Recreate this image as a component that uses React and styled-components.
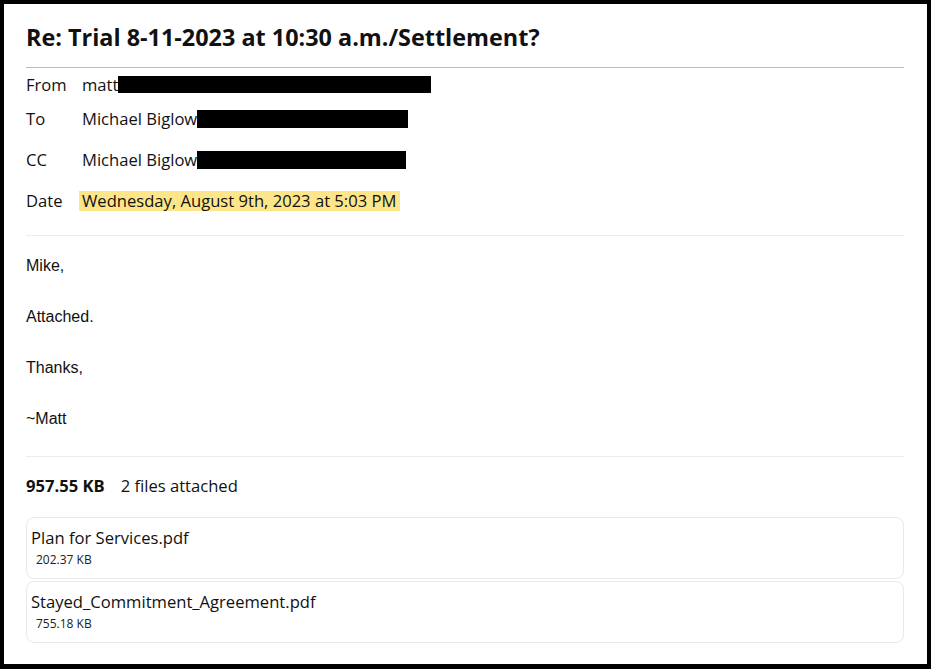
import React from "react";
import styled, { createGlobalStyle } from "styled-components";

const Global = createGlobalStyle`
  html, body { margin: 0; padding: 0; background: #000; }
  body { font-family: "Open Sans", "Noto Sans", sans-serif; color: #111; }
`;

const Page = styled.div`
  box-sizing: border-box;
  width: 931px;
  height: 669px;
  border: 4px solid #000;
  border-bottom-width: 5px;
  background: #fff;
  padding: 19px 23px 0 22px;
  overflow: hidden;
`;

const Title = styled.h1`
  margin: 0;
  font-family: "Open Sans", sans-serif;
  font-weight: 700;
  font-size: 23.4px;
  line-height: 28px;
  color: #111;
`;

const Divider = styled.hr`
  margin: ${(p) => p.$mt || 0}px 0 0;
  border: 0;
  height: 1px;
  background: ${(p) => (p.$strong ? "#bdbdbd" : "#ececec")};
`;

const Meta = styled.div`
  display: flex;
  flex-direction: column;
`;

const Row = styled.div`
  display: grid;
  grid-template-columns: 56px 1fr;
  align-items: center;
  height: 34px;
  padding-bottom: 1px;
  box-sizing: border-box;
  margin-top: ${(p) => p.$mt || 0}px;
  font-size: 16.6px;
`;

const Label = styled.span``;

const Value = styled.span`
  display: flex;
  align-items: center;
`;

const Redact = styled.span`
  display: inline-block;
  background: #000;
  width: ${(p) => p.$w}px;
  height: ${(p) => p.$h || 18}px;
`;

const Highlight = styled.span`
  background: #fde68a;
  margin-left: -3px;
  padding: 0 4px 0 3px;
  line-height: 20px;
`;

const Body = styled.div`
  display: flex;
  flex-direction: column;
  gap: 33px;
  padding-top: 21px;
  font-family: "Liberation Sans", Arial, sans-serif;
  font-size: 16px;
  line-height: 18px;
  color: #111;
`;

const Para = styled.p`
  margin: 0;
`;

const Summary = styled.div`
  margin-top: 18px;
  display: flex;
  gap: 16px;
  font-size: 16.6px;
  line-height: 22px;
`;

const Size = styled.strong`
  font-weight: 700;
`;

const Files = styled.div`
  margin-top: 20px;
  display: flex;
  flex-direction: column;
  gap: 2px;
`;

const Card = styled.div`
  border: 1px solid #ece9e2;
  border-radius: 8px;
  padding: 10px 4px 11px;
  display: flex;
  flex-direction: column;
  gap: 5px;
`;

const FileName = styled.div`
  font-size: 16.6px;
  line-height: 20px;
`;

const FileSize = styled.div`
  font-size: 12px;
  line-height: 14px;
  margin-left: 5px;
  color: #222;
`;

const files = [
  { name: "Plan for Services.pdf", size: "202.37 KB" },
  { name: "Stayed_Commitment_Agreement.pdf", size: "755.18 KB" },
];

export default function App() {
  return (
    <>
      <Global />
      <Page>
        <Title>Re: Trial 8-11-2023 at 10:30 a.m./Settlement?</Title>
        <Divider $strong $mt={16} />
        <Meta>
          <Row>
            <Label>From</Label>
            <Value>
              matt<Redact $w={313} $h={17} />
            </Value>
          </Row>
          <Row>
            <Label>To</Label>
            <Value>
              Michael Biglow<Redact $w={211} />
            </Value>
          </Row>
          <Row $mt={7}>
            <Label>CC</Label>
            <Value>
              Michael Biglow<Redact $w={209} />
            </Value>
          </Row>
          <Row $mt={7}>
            <Label>Date</Label>
            <Value>
              <Highlight>Wednesday, August 9th, 2023 at 5:03 PM</Highlight>
            </Value>
          </Row>
        </Meta>
        <Divider $mt={17} />
        <Body>
          <Para>Mike,</Para>
          <Para>Attached.</Para>
          <Para>Thanks,</Para>
          <Para>~Matt</Para>
        </Body>
        <Divider $mt={28} />
        <Summary>
          <Size>957.55 KB</Size>
          <span>2 files attached</span>
        </Summary>
        <Files>
          {files.map((f) => (
            <Card key={f.name}>
              <FileName>{f.name}</FileName>
              <FileSize>{f.size}</FileSize>
            </Card>
          ))}
        </Files>
      </Page>
    </>
  );
}
